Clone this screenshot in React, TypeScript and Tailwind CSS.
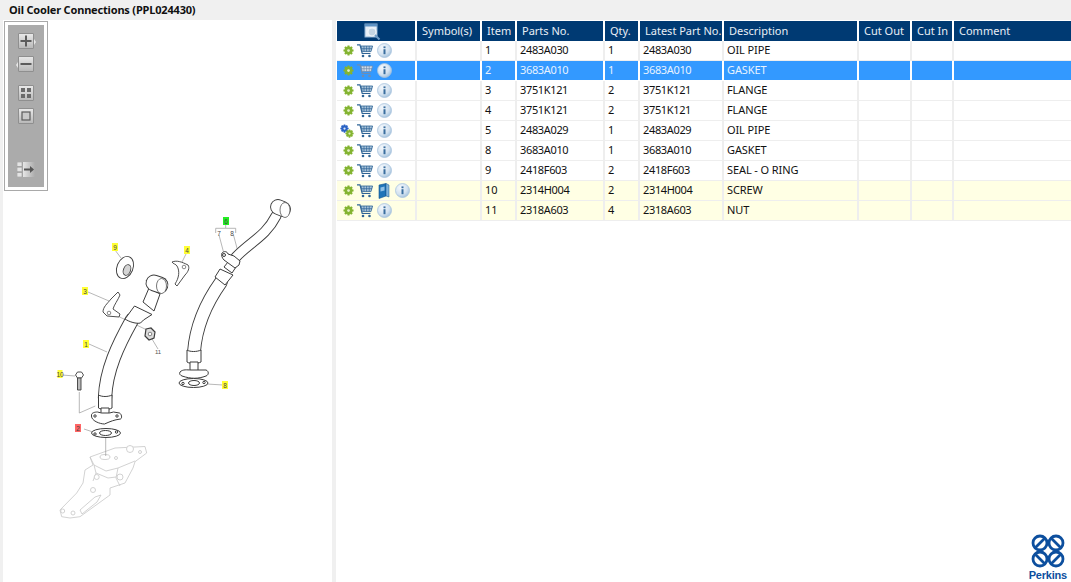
const columns = [
  { label: "", width: 79 },
  { label: "Symbol(s)", width: 65 },
  { label: "Item", width: 35 },
  { label: "Parts No.", width: 88 },
  { label: "Qty.", width: 35 },
  { label: "Latest Part No.", width: 84 },
  { label: "Description", width: 135 },
  { label: "Cut Out", width: 53 },
  { label: "Cut In", width: 42 },
  { label: "Comment", width: 118 },
];

const rows = [
  { item: "1", part: "2483A030", qty: "1", latest: "2483A030", desc: "OIL PIPE" },
  { item: "2", part: "3683A010", qty: "1", latest: "3683A010", desc: "GASKET", selected: true },
  { item: "3", part: "3751K121", qty: "2", latest: "3751K121", desc: "FLANGE" },
  { item: "4", part: "3751K121", qty: "2", latest: "3751K121", desc: "FLANGE" },
  { item: "5", part: "2483A029", qty: "1", latest: "2483A029", desc: "OIL PIPE", multi: true },
  { item: "8", part: "3683A010", qty: "1", latest: "3683A010", desc: "GASKET" },
  { item: "9", part: "2418F603", qty: "2", latest: "2418F603", desc: "SEAL - O RING" },
  { item: "10", part: "2314H004", qty: "2", latest: "2314H004", desc: "SCREW", book: true, yellow: true },
  { item: "11", part: "2318A603", qty: "4", latest: "2318A603", desc: "NUT", yellow: true },
];

function Gear({ color = "#84b431", size = 11, hole = "#e4efc4" }: { color?: string; size?: number; hole?: string }) {
  return (
    <svg width={size} height={size} viewBox="0 0 12 12" className="block">
      <g stroke={color} strokeWidth="2.200">
        <path d="M6 .5v11M.5 6h11M2.100 2.100l7.800 7.800M9.900 2.100l-7.800 7.800" />
      </g>
      <circle cx="6" cy="6" r="4.300" fill={color} />
      <circle cx="6" cy="6" r="1.500" fill={hole} />
    </svg>
  );
}

function Cart({ faded }: { faded?: boolean }) {
  const c = faded ? "#6f8db0" : "#2f6496";
  return (
    <svg width="16" height="14" viewBox="0 0 16 14" className="block">
      <path d="M0 .8h3l2.200 8.700h8.200" fill="none" stroke={c} strokeWidth="1.200" />
      <path d="M4 2h11.600l-1.600 5.600H5.200z" fill={faded ? "#d5dee8" : "#a9c3da"} stroke={c} strokeWidth=".8" />
      <path d="M7 2v5.600M9.600 2v5.600M12.200 2v5.600M4.600 4.700h10.400" stroke={c} strokeWidth=".7" />
      <circle cx="6" cy="12" r="1.300" fill={c} />
      <circle cx="12.500" cy="12" r="1.300" fill={c} />
    </svg>
  );
}

function Info({ id }: { id: string }) {
  return (
    <svg width="15" height="15" viewBox="0 0 15 15" className="block">
      <defs>
        <radialGradient id={id} cx="35%" cy="30%" r="80%">
          <stop offset="0" stopColor="#f4f8fc" />
          <stop offset=".6" stopColor="#d3e2f0" />
          <stop offset="1" stopColor="#98bad8" />
        </radialGradient>
      </defs>
      <circle cx="7.500" cy="7.500" r="7" fill={`url(#${id})`} stroke="#a9c5de" strokeWidth=".8" />
      <rect x="6.500" y="6.200" width="2" height="5" fill="#3a6f9f" />
      <rect x="6.500" y="3.400" width="2" height="1.800" fill="#3a6f9f" />
    </svg>
  );
}

function Book() {
  return (
    <svg width="12" height="16" viewBox="0 0 12 16" className="block">
      <path d="M1 2 8 .5V13l-7 2.500z" fill="#1f74b8" stroke="#14568f" strokeWidth=".6" />
      <path d="M8 .5 11 2v12l-3-1z" fill="#7db2dc" stroke="#14568f" strokeWidth=".5" />
      <path d="M2.500 4.500 6.500 3.500v4l-4 1z" fill="#8fc0e6" />
    </svg>
  );
}

function HeaderSearch() {
  return (
    <svg width="17" height="18" viewBox="0 0 17 18" className="block">
      <rect x="1" y="1" width="12" height="13" fill="#e6eef6" stroke="#8fb2d3" />
      <path d="M1 1h12v2.500H1z" fill="#5f93c4" />
      <circle cx="8" cy="9" r="4" fill="#c6d6e4" stroke="#f4f7fa" strokeWidth="1.100" />
      <path d="m11 12 4.500 4.500" stroke="#6f9bc6" strokeWidth="2" />
    </svg>
  );
}

function ToolButton({ children, tip }: { children: React.ReactNode; tip?: "left" | "right" }) {
  return (
    <div className="relative w-[16px] h-[16px] flex items-center justify-center rounded-[1px] border border-[#8f8f8f] bg-gradient-to-b from-[#e8e8e8] to-[#b9b9b9]">
      {children}
      {tip === "right" && (
        <div className="absolute right-[-3px] top-[5px] w-0 h-0 border-y-[3px] border-y-transparent border-l-[2px] border-l-[#e8e8e8]" />
      )}
      {tip === "left" && (
        <div className="absolute left-[-3px] top-[5px] w-0 h-0 border-y-[3px] border-y-transparent border-r-[2px] border-r-[#e8e8e8]" />
      )}
    </div>
  );
}

function Toolbar() {
  return (
    <div className="absolute left-[1px] top-[1px] border border-[#a9a9a9] bg-white p-[3px]">
      <div className="w-[36px] h-[162px] bg-[#ababab] flex flex-col items-center pt-[8px]">
        <ToolButton tip="right">
          <svg width="12" height="12" viewBox="0 0 12 12"><path d="M6 .5v11M.5 6h11" stroke="#5c5c5c" strokeWidth="2" /></svg>
        </ToolButton>
        <div className="mt-[7px]">
          <ToolButton tip="left">
            <svg width="12" height="12" viewBox="0 0 12 12"><path d="M.5 6h11" stroke="#5c5c5c" strokeWidth="2" /></svg>
          </ToolButton>
        </div>
        <div className="mt-[13px]">
          <ToolButton>
            <svg width="12" height="12" viewBox="0 0 12 12"><path d="M1 1h4v4H1zM7 1h4v4H7zM1 7h4v4H1zM7 7h4v4H7z" fill="#6a6a6a" /></svg>
          </ToolButton>
        </div>
        <div className="mt-[7px]">
          <ToolButton>
            <svg width="12" height="12" viewBox="0 0 12 12"><rect x="2" y="2" width="8" height="8" fill="#c9c9c9" stroke="#5c5c5c" strokeWidth="1.200" /></svg>
          </ToolButton>
        </div>
        <div className="mt-[38px]">
          <svg width="18" height="15" viewBox="0 0 18 15" className="block">
            <defs>
              <linearGradient id="panel-fade" x1="0" x2="1" y1="0" y2="0">
                <stop offset="0" stopColor="#e6e6e6" />
                <stop offset="1" stopColor="#ababab" />
              </linearGradient>
            </defs>
            <path d="M0 0h5v4.500H0zM0 5.200h5v4.500H0zM0 10.400h5V15H0z" fill="#e4e4e4" stroke="#8f8f8f" strokeWidth=".5" />
            <rect x="6" y="0" width="12" height="15" fill="url(#panel-fade)" />
            <path d="M7 7.500h7" stroke="#555" strokeWidth="2" />
            <path d="m13 4 4 3.500-4 3.500z" fill="#555" />
          </svg>
        </div>
      </div>
    </div>
  );
}

function Callout({ x, y, text, fill, w = 6 }: { x: number; y: number; text: string; fill?: string; w?: number }) {
  return (
    <g>
      {fill && <rect x={x - w / 2} y={y - 4} width={w} height="8" fill={fill} />}
      <text x={x} y={y + 2.500} textAnchor="middle" fontSize="6.500" fill="#444" fontFamily="Liberation Sans, sans-serif">{text}</text>
    </g>
  );
}

// outline first, then the same path thinner in white, gives the tube look
function Tube({ d, w }: { d: string; w: number }) {
  return (
    <g fill="none" strokeLinecap="round">
      <path d={d} stroke="#3c3c3c" strokeWidth={w + 1.800} />
      <path d={d} stroke="#fff" strokeWidth={w} />
    </g>
  );
}

function Drawing() {
  const dark = "#3c3c3c";
  const thin = "#9a9a9a";
  const pale = "#c6c6c6";
  return (
    <svg viewBox="3 20 329 562" className="block w-full h-full">
      {/* housing */}
      <g stroke={pale} strokeWidth=".8" fill="#fff">
        <path d="M90 457l25-9 30-1.500 1.700 6.500-11.700 8.700-2 6.300-8 15-15 5v7l-30 21.700-10 1.300-8.300-1.300L60 510l16.700-17 6.300-10 2-13 8-5z" />
        <path d="M90 457l4 8 12 6 12-3 17-7M94 465l2 8-3 8M118 468l-2 10 4 8M96 473l12 5 8-1M80 510l15-13 6-2-4 7-15 12z" fill="none" />
        <ellipse cx="105" cy="457" rx="5" ry="2.500" />
        <circle cx="130" cy="449" r="3.500" />
        <circle cx="116" cy="458" r="1.500" />
        <circle cx="140" cy="452" r="1.500" />
        <circle cx="93" cy="490" r="2.500" />
        <circle cx="120" cy="477" r="3" />
        <circle cx="96.700" cy="477" r="2.500" />
        <circle cx="73" cy="513" r="2" />
        <circle cx="62.700" cy="511" r="2" />
      </g>

      {/* leader lines */}
      <g stroke={thin} strokeWidth=".7" fill="none">
        <path d="M115 250l6 8M186 254l-4 8M88 292l21 9M107 311l40 19M152 339l6 10M89 344l18 8M62 375l13 1M79.300 392v21l16-7M84 429l9 3M105.700 438v18M207 384l16 1M215.700 233v-4.700h20v4.700M225.700 228v-3M219 235l4.500 17M233.500 235l4 15" />
      </g>

      {/* washer 9 */}
      <g stroke={dark} strokeWidth=".9" fill="#fff">
        <ellipse cx="125" cy="267.500" rx="8" ry="11.500" transform="rotate(22 125 267.500)" />
        <ellipse cx="127" cy="270" rx="3.500" ry="5.500" transform="rotate(22 127 270)" fill="#d5d5d5" />
      </g>

      {/* flange 4 */}
      <path d="M172 262c5-2 10 0 16 3 2 3 0 7-3 10l-8 11-2-2c4-6 5-13 2-18-1-2-4-2-5-4z" fill="#fff" stroke={dark} strokeWidth=".9" />
      <circle cx="184" cy="267" r="1.800" fill="#fff" stroke={dark} strokeWidth=".6" />

      {/* flange 3 */}
      <path d="M118 292l2 3c-2 5-6 10-7 14l7 5-1 3-12-1-4-4c0-5 4-8 8-13z" fill="#fff" stroke={dark} strokeWidth=".9" />
      <circle cx="109" cy="313" r="1.800" fill="#fff" stroke={dark} strokeWidth=".6" />

      {/* nut 11 */}
      <path d="M146 329l5-1 4 4-1 6-5 2-4-4z" fill="#ddd" stroke={dark} strokeWidth="1.200" />
      <circle cx="150" cy="334" r="1.800" fill="#fff" stroke={dark} strokeWidth=".6" />
      <text x="158" y="354" textAnchor="middle" fontSize="6" fill="#555" fontFamily="Liberation Sans, sans-serif">11</text>

      {/* left pipe */}
      <Tube d="M105 398C106 370 118 345 132 320" w={12.500} />
      <g stroke={dark} strokeWidth="1" fill="#fff">
        <path d="M143 302l6-14 11 6-6 17z" />
        <path d="M125 319l9.500-13 17.500 8.500-8.500 5.500-3 3c-4 1-11-1-15.500-4z" />
      </g>
      <Tube d="M154 283l6 2" w={15} />
      <ellipse cx="161.500" cy="286" rx="5" ry="7.500" fill="#fff" stroke={dark} strokeWidth=".7" />
      <g stroke={dark} strokeWidth="1" fill="#fff">
        <path d="M98.500 395v13c3 2 10 2 13.500 0v-13c-4 2-10 2-13.500 0z" />
        <path d="M101 408v9h8v-9z" />
        <path d="M91.500 415c0-2 3-3 6-3l4 1h8l4-1 6 1c2 1 3 5 1 6-7 1-9 2-16 5-4 0-14-3-13-9z" />
        <circle cx="95" cy="416" r="1.200" />
        <circle cx="117" cy="416" r="1.200" />
        <ellipse cx="106" cy="433" rx="14.500" ry="4.500" />
        <ellipse cx="105.500" cy="433" rx="6" ry="2.500" />
        <circle cx="95" cy="434" r="1.200" />
        <circle cx="116.500" cy="432" r="1.200" />
      </g>

      {/* bolt 10 */}
      <g stroke={dark} strokeWidth=".9" fill="#fff">
        <path d="M75.500 375l2-3h4l2 3-2 3h-4z" />
        <path d="M77.500 378h3.500v12h-3.500z" fill="#bbb" />
      </g>

      {/* right pipe */}
      <Tube d="M194 352C196 325 206 303 221 282" w={12} />
      <Tube d="M236 257C250 242 266 236 276 216" w={9} />
      <g stroke={dark} strokeWidth="1" fill="#fff">
        <path d="M215 277l5-8 13 6-8 10z" />
        <path d="M224 267l4-5 8 5-4 6z" />
        <path d="M222 253c2-2 5-2 6 1l6 2 6 5-1 4-4 3-11-8c-2-2-3-5-2-7z" />
        <circle cx="224" cy="255" r="1.500" />
      </g>
      <Tube d="M278 207l5 2" w={14} />
      <ellipse cx="285" cy="210" rx="5" ry="7.500" fill="#fff" stroke={dark} strokeWidth=".7" />
      <g stroke={dark} strokeWidth="1" fill="#fff">
        <path d="M187 350v12c3 2 10 2 14 0v-12c-4 2-11 2-14 0z" />
        <path d="M190 362v9h8v-9z" />
        <path d="M180 372c3-3 7-2 11-2l15 0c3 1 3 5 0 6-8 3-15 3-24 0-2-1-3-2-2-4z" />
        <ellipse cx="193.500" cy="383" rx="14.500" ry="4.500" />
        <ellipse cx="194" cy="383" rx="5.500" ry="2.500" />
        <circle cx="183" cy="383.500" r="1.200" />
        <circle cx="204" cy="382.500" r="1.200" />
      </g>

      <Callout x={115} y={247} text="9" fill="#ffff33" />
      <Callout x={187} y={250} text="4" fill="#ffff33" />
      <Callout x={85} y={291} text="3" fill="#ffff33" />
      <Callout x={86} y={344} text="1" fill="#ffff33" />
      <Callout x={60} y={374} text="10" fill="#ffff33" w={5} />
      <Callout x={78} y={428} text="2" fill="#ff6666" />
      <Callout x={225} y={385} text="8" fill="#ffff33" />
      <Callout x={226} y={221} text="6" fill="#22ee22" />
      <Callout x={219} y={233} text="7" />
      <Callout x={232} y={233} text="8" />
    </svg>
  );
}

function PerkinsLogo() {
  const c = "#0d4f9e";
  return (
    <div className="flex flex-col items-center">
      <svg width="34" height="34" viewBox="0 0 34 34" className="block">
        <g fill="none" stroke={c} strokeWidth="2.800">
          <circle cx="9" cy="9" r="7" />
          <circle cx="25" cy="9" r="7" />
          <circle cx="9" cy="25" r="7" />
          <circle cx="25" cy="25" r="7" />
          <path d="M4 14 14 4M20 4l10 10M4 20l10 10M30 20 20 30" />
        </g>
      </svg>
      <span className="text-[11px] leading-[12px] font-bold text-[#0d4f9e] mt-[1px] tracking-[-0.2px] font-['Liberation_Sans',sans-serif]">
        Perkins
      </span>
    </div>
  );
}

function IconCell({ row, index }: { row: (typeof rows)[number]; index: number }) {
  return (
    <div className="flex items-center h-[19px]">
      <div className="w-[20px] flex justify-end pr-[3px]">
        {row.multi ? (
          <div className="relative w-[14px] h-[14px]">
            <div className="absolute left-0 top-0"><Gear color="#2a62c4" size={9} hole="#dfe9fa" /></div>
            <div className="absolute right-0 bottom-0"><Gear size={9} /></div>
          </div>
        ) : (
          <Gear />
        )}
      </div>
      <Cart faded={row.selected} />
      {row.book ? (
        <div className="flex items-center">
          <div className="ml-[5px]"><Book /></div>
          <div className="ml-[5px]"><Info id={`info-${index}`} /></div>
        </div>
      ) : (
        <div className="ml-[4px]"><Info id={`info-${index}`} /></div>
      )}
    </div>
  );
}

export default function App() {
  return (
    <div className="w-[1071px] h-[582px] bg-[#f0f0f0] flex flex-col overflow-hidden font-['Noto_Sans','Liberation_Sans',sans-serif]">
      <div className="h-[20px] shrink-0 flex items-center pl-[9px] text-[11px] font-bold text-[#111] tracking-[-0.18px]">
        Oil Cooler Connections (PPL024430)
      </div>
      <div className="flex flex-1 min-h-0 pl-[3px]">
        <div className="relative w-[329px] bg-white">
          <Drawing />
          <Toolbar />
        </div>
        <div className="relative ml-[4px] w-[735px] bg-white pt-[1px] pl-[1px]">
          <table className="table-fixed border-collapse w-[734px] text-[11px]">
            <colgroup>
              {columns.map((c, i) => (
                <col key={i} style={{ width: c.width }} />
              ))}
            </colgroup>
            <thead>
              <tr className="h-[20px] bg-[#003a73] text-[#e8eef5]">
                {columns.map((c, i) => (
                  <th key={i} className="p-0 pl-[5px] pt-[1px] font-normal text-left border-r-2 border-white last:border-r-0 whitespace-nowrap">
                    {i === 0 ? (
                      <div className="flex justify-center pr-[12px] -my-[1px]"><HeaderSearch /></div>
                    ) : (
                      c.label
                    )}
                  </th>
                ))}
              </tr>
            </thead>
            <tbody>
              {rows.map((r, i) => (
                <tr
                  key={r.item}
                  className={
                    (i === 0 ? "h-[19px] " : "h-[20px] ") +
                    "border-b " +
                    (r.selected
                      ? "bg-[#3399ff] text-[#e6f2ff] border-white"
                      : r.yellow
                      ? "bg-[#ffffe4] text-[#111] border-[#eeeeee]"
                      : "bg-white text-[#111] border-[#eeeeee]")
                  }
                >
                  <td className={"p-0 border-r-2 " + (r.selected ? "border-white" : "border-[#eeeeee]")}>
                    <IconCell row={r} index={i} />
                  </td>
                  {["", r.item, r.part, r.qty, r.latest, r.desc, "", "", ""].map((v, j) => (
                    <td
                      key={j}
                      className={
                        "p-0 pl-[3px] whitespace-nowrap border-r-2 last:border-r-0 " +
                        (r.selected ? "border-white " : "border-[#eeeeee] ") +
                        (j === 2 || j === 4 ? "tracking-[-0.35px] " : j === 5 ? "tracking-[-0.1px]" : "")
                      }
                    >
                      {v}
                    </td>
                  ))}
                </tr>
              ))}
            </tbody>
          </table>
          <div className="absolute right-[4px] bottom-[1px]">
            <PerkinsLogo />
          </div>
        </div>
      </div>
    </div>
  );
}
